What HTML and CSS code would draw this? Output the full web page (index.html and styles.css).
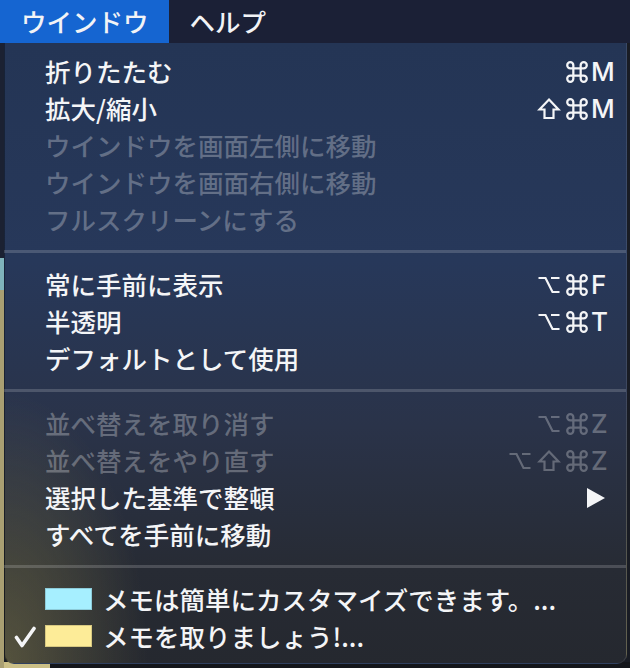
FILE: index.html
```html
<!DOCTYPE html>
<html lang="ja">
<head>
<meta charset="utf-8">
<title>ウインドウ メニュー</title>
<link rel="stylesheet" href="styles.css">
</head>
<body>
<div class="screen">
  <div class="menubar">
    <span class="mb-item is-open">ウインドウ</span>
    <span class="mb-item">ヘルプ</span>
  </div>
  <div class="desk">
    <div class="menu">
      <div class="group">
        <div class="row">
          <span class="mark"></span>
          <span class="label">折りたたむ</span>
          <span class="keys">
            <svg class="mod cmd" viewBox="3 3 18 18"><path d="M9 9V6.5A2.5 2.5 0 1 0 6.5 9H17.5A2.5 2.5 0 1 0 15 6.5V17.5A2.5 2.5 0 1 0 17.5 15H6.5A2.5 2.5 0 1 0 9 17.5Z"/></svg>
            <span class="key">M</span>
          </span>
        </div>
        <div class="row">
          <span class="mark"></span>
          <span class="label">拡大/縮小</span>
          <span class="keys">
            <svg class="mod" viewBox="0 0 24 24"><path d="M12 2.5L21.5 12.5H16.5V21H7.5V12.5H2.5Z"/></svg>
            <svg class="mod cmd" viewBox="3 3 18 18"><path d="M9 9V6.5A2.5 2.5 0 1 0 6.5 9H17.5A2.5 2.5 0 1 0 15 6.5V17.5A2.5 2.5 0 1 0 17.5 15H6.5A2.5 2.5 0 1 0 9 17.5Z"/></svg>
            <span class="key">M</span>
          </span>
        </div>
        <div class="row is-disabled">
          <span class="mark"></span>
          <span class="label">ウインドウを画面左側に移動</span>
        </div>
        <div class="row is-disabled">
          <span class="mark"></span>
          <span class="label">ウインドウを画面右側に移動</span>
        </div>
        <div class="row is-disabled">
          <span class="mark"></span>
          <span class="label">フルスクリーンにする</span>
        </div>
      </div>
      <div class="sep"></div>
      <div class="group">
        <div class="row">
          <span class="mark"></span>
          <span class="label">常に手前に表示</span>
          <span class="keys">
            <svg class="mod" viewBox="0 0 24 24"><path d="M1.5 5H8.5L15.5 19H22.5M14 5H22.5"/></svg>
            <svg class="mod cmd" viewBox="3 3 18 18"><path d="M9 9V6.5A2.5 2.5 0 1 0 6.5 9H17.5A2.5 2.5 0 1 0 15 6.5V17.5A2.5 2.5 0 1 0 17.5 15H6.5A2.5 2.5 0 1 0 9 17.5Z"/></svg>
            <span class="key">F</span>
          </span>
        </div>
        <div class="row">
          <span class="mark"></span>
          <span class="label">半透明</span>
          <span class="keys">
            <svg class="mod" viewBox="0 0 24 24"><path d="M1.5 5H8.5L15.5 19H22.5M14 5H22.5"/></svg>
            <svg class="mod cmd" viewBox="3 3 18 18"><path d="M9 9V6.5A2.5 2.5 0 1 0 6.5 9H17.5A2.5 2.5 0 1 0 15 6.5V17.5A2.5 2.5 0 1 0 17.5 15H6.5A2.5 2.5 0 1 0 9 17.5Z"/></svg>
            <span class="key">T</span>
          </span>
        </div>
        <div class="row">
          <span class="mark"></span>
          <span class="label">デフォルトとして使用</span>
        </div>
      </div>
      <div class="sep"></div>
      <div class="group">
        <div class="row is-disabled">
          <span class="mark"></span>
          <span class="label">並べ替えを取り消す</span>
          <span class="keys">
            <svg class="mod" viewBox="0 0 24 24"><path d="M1.5 5H8.5L15.5 19H22.5M14 5H22.5"/></svg>
            <svg class="mod cmd" viewBox="3 3 18 18"><path d="M9 9V6.5A2.5 2.5 0 1 0 6.5 9H17.5A2.5 2.5 0 1 0 15 6.5V17.5A2.5 2.5 0 1 0 17.5 15H6.5A2.5 2.5 0 1 0 9 17.5Z"/></svg>
            <span class="key">Z</span>
          </span>
        </div>
        <div class="row is-disabled">
          <span class="mark"></span>
          <span class="label">並べ替えをやり直す</span>
          <span class="keys">
            <svg class="mod" viewBox="0 0 24 24"><path d="M1.5 5H8.5L15.5 19H22.5M14 5H22.5"/></svg>
            <svg class="mod" viewBox="0 0 24 24"><path d="M12 2.5L21.5 12.5H16.5V21H7.5V12.5H2.5Z"/></svg>
            <svg class="mod cmd" viewBox="3 3 18 18"><path d="M9 9V6.5A2.5 2.5 0 1 0 6.5 9H17.5A2.5 2.5 0 1 0 15 6.5V17.5A2.5 2.5 0 1 0 17.5 15H6.5A2.5 2.5 0 1 0 9 17.5Z"/></svg>
            <span class="key">Z</span>
          </span>
        </div>
        <div class="row">
          <span class="mark"></span>
          <span class="label">選択した基準で整頓</span>
          <span class="keys">
            <svg class="submenu" viewBox="0 0 18 20"><path d="M0 0L18 10L0 20Z"/></svg>
          </span>
        </div>
        <div class="row">
          <span class="mark"></span>
          <span class="label">すべてを手前に移動</span>
        </div>
      </div>
      <div class="sep"></div>
      <div class="group">
        <div class="row">
          <span class="mark"></span>
          <span class="label with-swatch"><span class="swatch swatch-blue"></span>メモは簡単にカスタマイズできます。...</span>
        </div>
        <div class="row">
          <span class="mark"><svg class="check" viewBox="0 0 22 22"><path d="M2.5 11.5L8 19.5L20 2.5"/></svg></span>
          <span class="label with-swatch"><span class="swatch swatch-yellow"></span>メモを取りましょう!...</span>
        </div>
      </div>
    </div>
  </div>
</div>
</body>
</html>
```

FILE: styles.css
```css
html, body {
  margin: 0;
  padding: 0;
  background: #191c24;
}

.screen {
  width: 630px;
  height: 668px;
  overflow: hidden;
  display: flex;
  flex-direction: column;
  font-family: "Noto Sans CJK JP", "Noto Sans", sans-serif;
  font-weight: 500;
  color: #f4f5f7;
}

.menubar {
  height: 43px;
  flex: none;
  display: flex;
  align-items: stretch;
  background: #1b2036;
}

.mb-item {
  display: flex;
  align-items: center;
  padding: 0 20px 2px 21px;
  font-size: 25.5px;
  line-height: 1;
  color: #f2f3f6;
}

.mb-item.is-open {
  background: #1565d1;
}

.desk {
  flex: 1;
  display: flex;
  align-items: flex-start;
  background:
    linear-gradient(to bottom, #1b2132 0, #1b2132 215px, #7fb3bb 215px, #7fb3bb 247px, #a99f72 247px) 0 0 / 4px 100% no-repeat,
    linear-gradient(to right, #cbbf86 0, #cbbf86 50px, #14161b 50px) 0 100% / 100% 6px no-repeat,
    #191c24;
}

.menu {
  margin-left: 4px;
  width: 623px;
  flex: none;
  box-sizing: border-box;
  padding: 10px 12px 8px 0;
  border-radius: 0 0 10px 10px;
  border-left: 1px solid rgba(0, 0, 0, 0.35);
  border-right: 1px solid rgba(255, 255, 255, 0.10);
  border-bottom: 1px solid rgba(255, 255, 255, 0.06);
  background:
    radial-gradient(ellipse 190px 360px at 0% 100%, rgba(150, 140, 80, 0.42), rgba(150, 140, 80, 0) 75%),
    linear-gradient(to bottom, #243555 0%, #27385a 35%, #2a3349 62%, #272b34 85%, #25282f 100%);
}

.sep {
  height: 3px;
  margin: 12px -12px 13px -1px;
  background: rgba(255, 255, 255, 0.17);
}

.row {
  height: 37px;
  display: grid;
  grid-template-columns: 40px 1fr auto;
  align-items: center;
}

.mark {
  display: flex;
  align-items: center;
}

.label {
  font-size: 25.5px;
  line-height: 35px;
  padding-bottom: 2px;
  white-space: nowrap;
}

.row.is-disabled {
  color: rgba(255, 255, 255, 0.28);
}

.keys {
  display: flex;
  align-items: center;
  gap: 5px;
}

.mod {
  width: 24px;
  height: 24px;
  fill: none;
  stroke: currentColor;
  stroke-width: 2.2;
  stroke-linejoin: miter;
}

.mod.cmd {
  width: 22px;
  height: 22px;
  stroke-width: 1.85;
}

.key {
  width: 23px;
  margin-left: -2px;
  font-family: "Inter", "Liberation Sans", sans-serif;
  font-size: 26px;
  font-weight: 500;
  line-height: 1;
}

.submenu {
  width: 18px;
  height: 20px;
  margin-right: 9px;
  fill: currentColor;
}

.check {
  width: 22px;
  height: 22px;
  margin-left: 9px;
  fill: none;
  stroke: currentColor;
  stroke-width: 3.6;
  stroke-linecap: round;
  stroke-linejoin: round;
}

.with-swatch {
  display: flex;
  align-items: center;
  gap: 11px;
}

.swatch {
  width: 47px;
  height: 22px;
  box-sizing: border-box;
  border: 1px solid rgba(0, 0, 0, 0.15);
}

.swatch-blue {
  background: #a6efff;
}

.swatch-yellow {
  background: #fdec98;
}
```
